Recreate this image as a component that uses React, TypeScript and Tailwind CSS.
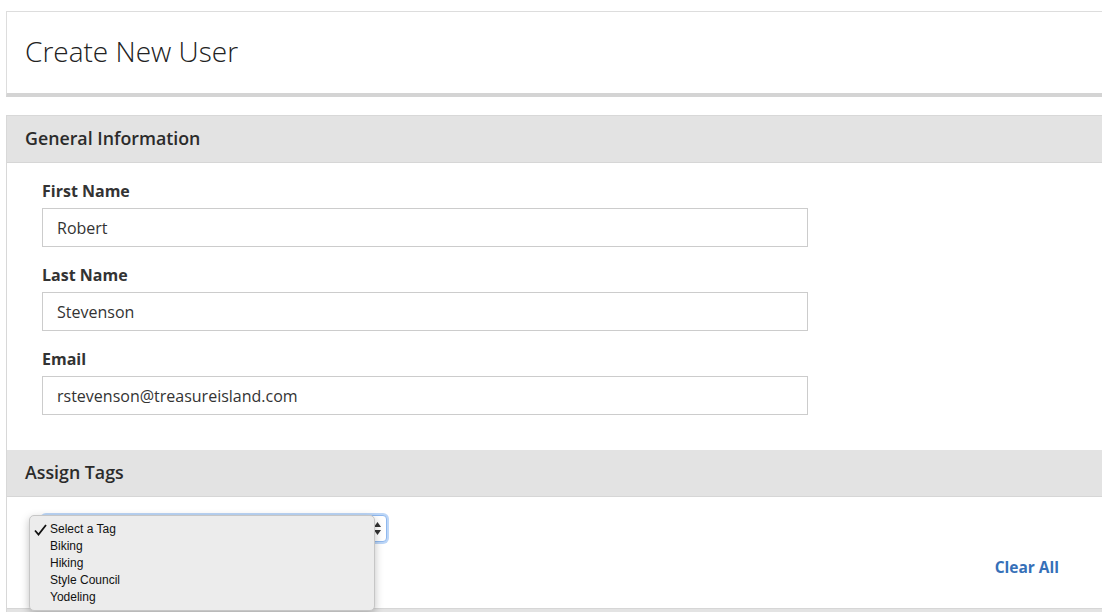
import { useState } from "react";

const tags = ["Biking", "Hiking", "Style Council", "Yodeling"];

function Field({ label, value }: { label: string; value: string }) {
	return (
		<div className="mb-[18px] flex flex-col">
			<label className="mb-[7px] text-[16px] leading-[20px] font-bold text-[#333]">{label}</label>
			<input
				readOnly
				value={value}
				className="h-[39px] w-[766px] border border-[#cccccc] bg-white px-[14px] text-[16px] text-[#333] outline-none"
			/>
		</div>
	);
}

function SectionHeader({ title }: { title: string }) {
	return (
		<div className="flex h-[47px] items-center border-b border-[#d6d6d6] bg-[#e3e3e3] pb-[2px] pl-[18px]">
			<h2 className="text-[17.8px] font-semibold text-[#2b2b2b]">{title}</h2>
		</div>
	);
}

export default function App() {
	const [selected] = useState("Select a Tag");

	return (
		<div
			className="h-[612px] overflow-hidden bg-white pl-[6px] pt-[11px]"
			style={{ fontFamily: "'Open Sans', sans-serif" }}
		>
			<header className="flex h-[86px] items-center border-t border-l border-b-4 border-t-[#dddddd] border-l-[#dddddd] border-b-[#d4d4d4] pb-[4px] pl-[18px]">
				<h1 className="text-[28px] font-light text-[#222]">Create New User</h1>
			</header>

			<section className="mt-[18px] border-t border-l border-[#d8d8d8]">
				<SectionHeader title="General Information" />
				<div className="pl-[35px] pt-[18px] pb-[17px]">
					<Field label="First Name" value="Robert" />
					<Field label="Last Name" value="Stevenson" />
					<Field label="Email" value="rstevenson@treasureisland.com" />
				</div>

				<SectionHeader title="Assign Tags" />
				<div className="pt-[18px] pb-[29px]">
					<div className="pl-[35px]">
						<div className="relative h-[27px] w-[345px] rounded-[4px] border border-[#8fb8ee] bg-white shadow-[0_0_0_2px_#bcd6f7]">
							<svg
								className="absolute right-[5px] top-[6px]"
								width="7"
								height="13"
								viewBox="0 0 7 13"
								aria-hidden
							>
								<path d="M3.5 0 L7 5 L0 5 Z" fill="#333" />
								<path d="M3.5 13 L7 8 L0 8 Z" fill="#333" />
							</svg>
							<ul
								className="absolute -left-[14px] -top-px z-10 w-[346px] rounded-[5px] border border-[#c6c6c6] bg-[#ececec] pt-[5px] pb-[4px] text-[12px] leading-[17px] text-[#111] shadow-[0_3px_8px_rgba(0,0,0,0.25)]"
								style={{ fontFamily: "'Liberation Sans', Arial, sans-serif" }}
							>
								<li className="flex items-center">
									<svg className="ml-[4px] mr-[3px]" width="13" height="12" viewBox="0 0 13 12" aria-hidden>
										<path d="M1 6.5 L4.5 10.5 L12 1" fill="none" stroke="#111" strokeWidth="1.8" />
									</svg>
									<span>{selected}</span>
								</li>
								{tags.map((tag) => (
									<li key={tag} className="pl-[20px]">
										{tag}
									</li>
								))}
							</ul>
						</div>
					</div>
					<div className="mt-[13px] flex justify-end pr-[43px]">
						<a href="#" className="text-[15.5px] leading-[24px] font-bold text-[#3670b8]">
							Clear All
						</a>
					</div>
				</div>
				<div className="h-[40px] border-t border-[#d6d6d6] bg-[#e3e3e3]" />
			</section>
		</div>
	);
}
